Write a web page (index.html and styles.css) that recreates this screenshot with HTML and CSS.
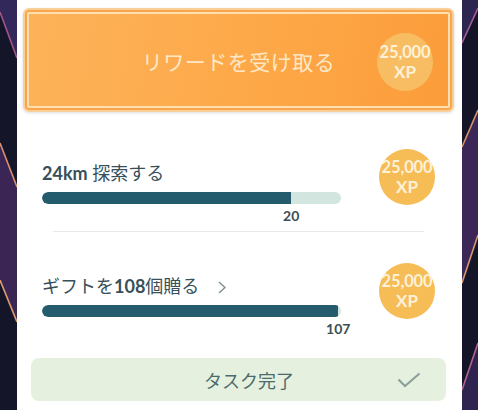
FILE: index.html
```html
<!DOCTYPE html>
<html lang="ja">
<head>
<meta charset="UTF-8"/>
<title>タスク</title>
<link rel="stylesheet" href="styles.css">
</head>
<body>
<div class="side side-left">
 <svg viewBox="0 0 17 410" preserveAspectRatio="none" width="17" height="410">
  <rect width="17" height="410" fill="#15152a"/>
  <polygon points="0,0 17,0 17,58 0,12" fill="#33285a"/>
  <line x1="0" y1="12" x2="17" y2="58" stroke="#a2568a" stroke-width="1.6"/>
  <polygon points="0,143 17,187 17,322 0,280" fill="#3a2554"/>
  <line x1="0" y1="143" x2="17" y2="187" stroke="#d8916c" stroke-width="1.6"/>
  <line x1="0" y1="280" x2="17" y2="322" stroke="#dc9c70" stroke-width="1.6"/>
 </svg>
</div>

<div class="panel">
 <div class="reward-btn">
  <span></span>
  <span class="reward-label">リワードを受け取る</span>
  <div class="xp xp-btn"><span class="xp-num">25,000</span><span class="xp-unit">XP</span></div>
 </div>

 <div class="task task-first">
  <div class="task-main">
   <div class="task-title"><b>24km</b> 探索する</div>
   <div class="bar"><div class="bar-fill" style="width:83.33%"></div></div>
   <div class="count-track" style="width:83.33%"><span class="count">20</span></div>
  </div>
  <div class="xp"><span class="xp-num">25,000</span><span class="xp-unit">XP</span></div>
 </div>

 <div class="divider"></div>

 <div class="task task-second">
  <div class="task-main">
   <div class="task-title">ギフトを<b>108</b>個贈る
    <svg class="chev" viewBox="0 0 8 13" width="8" height="13"><polyline points="1,1 7,6.5 1,12" fill="none" stroke="#7d8d93" stroke-width="1.4"/></svg>
   </div>
   <div class="bar"><div class="bar-fill" style="width:99.07%"></div></div>
   <div class="count-track" style="width:99.07%"><span class="count">107</span></div>
  </div>
  <div class="xp"><span class="xp-num">25,000</span><span class="xp-unit">XP</span></div>
 </div>

 <div class="done">
  <span class="done-label">タスク完了</span>
  <svg class="check" viewBox="0 0 24 16" width="24" height="16"><polyline points="1.5,7.5 8,14 22.5,1.5" fill="none" stroke="#8b9f9c" stroke-width="2.2"/></svg>
 </div>
</div>

<div class="side side-right">
 <svg viewBox="0 0 16 410" preserveAspectRatio="none" width="16" height="410">
  <rect width="16" height="410" fill="#15152a"/>
  <polygon points="0,0 16,0 16,8 0,43" fill="#2c2550"/>
  <line x1="16" y1="8" x2="0" y2="43" stroke="#a35c95" stroke-width="1.6"/>
  <polygon points="16,110 16,235 0,283 0,147" fill="#3b2657"/>
  <line x1="16" y1="110" x2="0" y2="147" stroke="#d9926e" stroke-width="1.6"/>
  <line x1="16" y1="235" x2="0" y2="283" stroke="#d99570" stroke-width="1.6"/>
  <polygon points="16,343 16,410 0,410 0,390" fill="#2f2450"/>
  <line x1="16" y1="343" x2="0" y2="390" stroke="#b0648e" stroke-width="1.6"/>
 </svg>
</div>
</body>
</html>
```

FILE: styles.css
```css
html, body {
 margin: 0;
 height: 410px;
 overflow: hidden;
}
body {
 display: flex;
 background: #15152a;
 font-family: Lato, "Noto Sans CJK JP", sans-serif;
}
.side svg {
 display: block;
}
.panel {
 width: 445px;
 height: 410px;
 background: #ffffff;
 padding-top: 8px;
 box-sizing: border-box;
}

/* リワードボタン */
.reward-btn {
 margin-left: 6px;
 width: 431px;
 height: 104px;
 box-sizing: border-box;
 border-radius: 6px;
 border: 2px solid #f8cf98;
 background: linear-gradient(100deg, #fdb35a 0%, #fda848 55%, #fc9c3a 100%);
 box-shadow: inset 0 0 0 2px #fba54a, inset 0 0 0 4px #fde0b2, 0 1px 3px rgba(120, 120, 120, 0.25);
 display: grid;
 grid-template-columns: 1fr auto 1fr;
 align-items: center;
 padding: 0 19px;
}
.reward-label {
 color: #fde8c6;
 font-size: 21px;
 letter-spacing: 0.5px;
 padding-top: 1px;
}
.xp {
 width: 56px;
 height: 56px;
 border-radius: 50%;
 background: #f6bc56;
 color: #fdf1d8;
 display: flex;
 flex-direction: column;
 align-items: center;
 justify-content: center;
 font-weight: bold;
 flex: none;
}
.xp-btn {
 justify-self: end;
 width: 56px;
 height: 58px;
 background: #f8bd62;
 margin-top: 4px;
}
.xp-num {
 font-size: 16.5px;
 line-height: 20px;
 letter-spacing: -0.1px;
 white-space: nowrap;
}
.xp-unit {
 font-size: 17px;
 line-height: 20px;
}

/* タスク */
.task {
 display: flex;
 align-items: flex-start;
 padding: 0 27px 0 25px;
}
.task-first {
 margin-top: 37px;
}
.task-second {
 margin-top: 31px;
}
.task-main {
 width: 299px;
}
.task-first .task-main {
 padding-top: 13px;
}
.task-second .task-main {
 padding-top: 12px;
}
.task .xp {
 margin-left: auto;
}
.task-title {
 color: #37505a;
 font-size: 18px;
 line-height: 22px;
 white-space: nowrap;
}
.task-title b {
 font-weight: bold;
}
.chev {
 margin-left: 14px;
 vertical-align: -1px;
}
.bar {
 margin-top: 8px;
 height: 12px;
 border-radius: 6px;
 background: #d3e5df;
 overflow: hidden;
}
.bar-fill {
 height: 100%;
 background: #245b6d;
 border-radius: 6px 0 0 6px;
}
.count-track {
 margin-top: 4px;
 height: 16px;
 display: flex;
 justify-content: flex-end;
}
.count {
 transform: translateX(50%);
 color: #3c4e55;
 font-size: 14px;
 font-weight: bold;
 line-height: 16px;
}
.divider {
 margin: 7px 38px 0 36px;
 height: 1px;
 background: #e6eaea;
}

/* 完了 */
.done {
 margin: 21px 16px 0 14px;
 height: 43px;
 border-radius: 8px;
 background: #e5f1de;
 display: flex;
 align-items: center;
 padding: 0 25px 0 20px;
}
.done-label {
 flex: 1;
 text-align: center;
 color: #4c6a6e;
 font-size: 18px;
 padding-left: 50px;
}
.check {
 display: block;
}
```
